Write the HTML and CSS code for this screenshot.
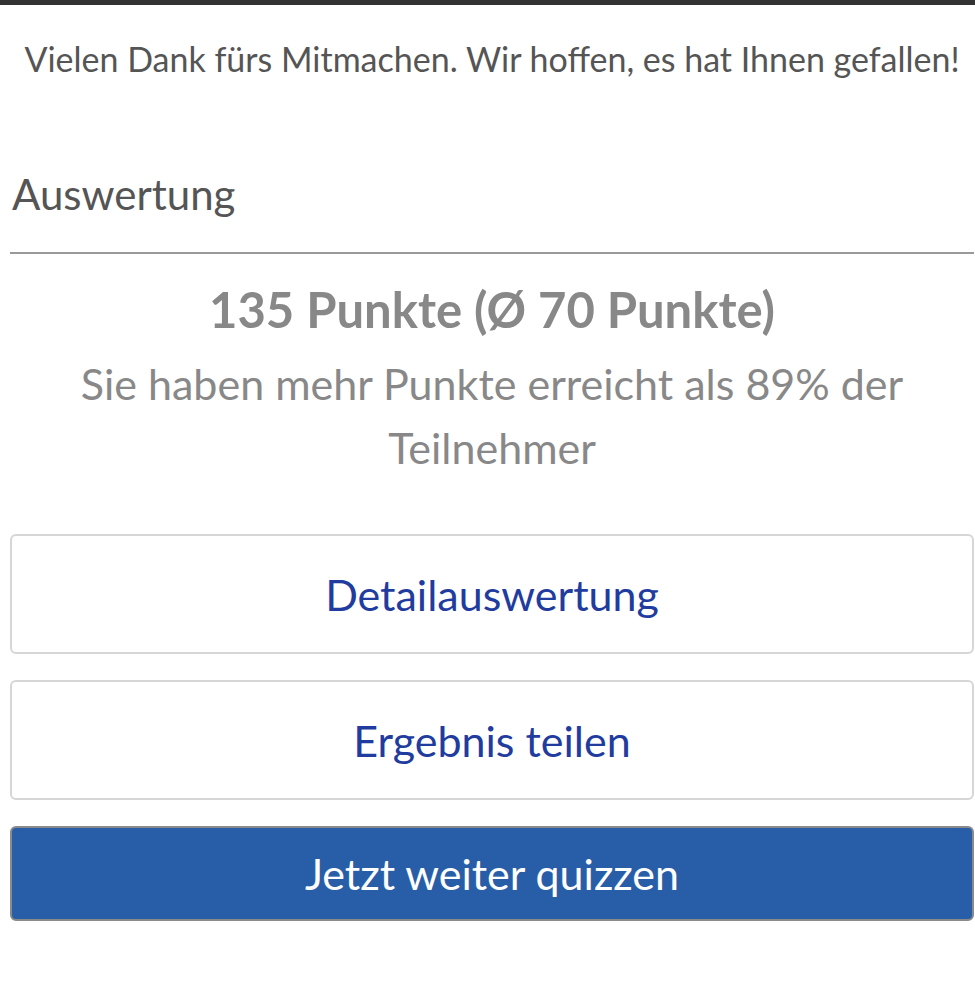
FILE: index.html
```html
<!DOCTYPE html>
<html lang="de">
<head>
<meta charset="utf-8">
<link rel="stylesheet" href="styles.css">
</head>
<body>
<div class="topbar"></div>
<main class="content">
  <p class="thanks">Vielen Dank fürs Mitmachen. Wir hoffen, es hat Ihnen gefallen!</p>
  <h2 class="section-title">Auswertung</h2>
  <hr class="divider">
  <p class="score">135 Punkte (Ø 70 Punkte)</p>
  <p class="compare">Sie haben mehr Punkte erreicht als 89% der Teilnehmer</p>
  <div class="actions">
    <button class="btn btn-outline">Detailauswertung</button>
    <button class="btn btn-outline">Ergebnis teilen</button>
    <button class="btn btn-primary">Jetzt weiter quizzen</button>
  </div>
</main>
</body>
</html>
```
FILE: styles.css
```css
html, body {
  margin: 0;
  padding: 0;
  background: #fff;
}
body {
  font-family: Lato, "Open Sans", sans-serif;
  color: #555;
}
.topbar {
  height: 5px;
  background: #333;
}
.content {
  padding: 0 1px 0 10px;
}
.thanks {
  margin: 0;
  padding-top: 33px;
  text-align: center;
  font-size: 34px;
  line-height: 42px;
  color: #555;
  white-space: nowrap;
}
.section-title {
  margin: 0;
  padding-top: 89px;
  font-weight: normal;
  font-size: 42px;
  line-height: 50px;
  color: #555;
  padding-left: 2px;
}
.divider {
  margin: 33px 0 0 0;
  border: 0;
  height: 2px;
  background: #999;
}
.score {
  margin: 0;
  padding-top: 25px;
  text-align: center;
  font-weight: bold;
  font-size: 49px;
  line-height: 60px;
  color: #888;
}
.compare {
  margin: 0;
  padding: 13px 40px 0 40px;
  text-align: center;
  font-size: 43px;
  line-height: 64px;
  color: #888;
}
.actions {
  display: flex;
  flex-direction: column;
  gap: 26px;
  margin-top: 54px;
}
.btn {
  display: block;
  width: 100%;
  font-family: inherit;
  font-size: 43px;
  border-radius: 6px;
  cursor: pointer;
}
.btn-outline {
  height: 120px;
  background: #fff;
  border: 2px solid #d6d6d6;
  color: #1f3c9e;
}
.btn-primary {
  height: 95px;
  background: #285ea8;
  border: 2px solid #8a8a8a;
  color: #fff;
}
```
